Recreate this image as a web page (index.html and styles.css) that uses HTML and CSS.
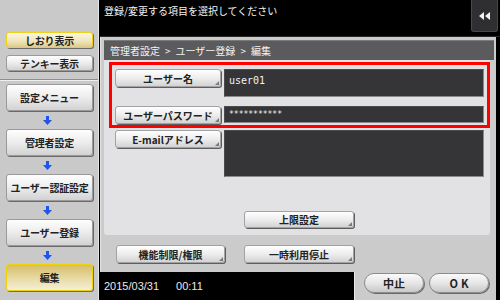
FILE: index.html
```html
<!DOCTYPE html>
<html lang="ja">
<head>
<meta charset="utf-8">
<title>編集</title>
<link rel="stylesheet" href="styles.css">
</head>
<body>
<aside class="side">
  <div class="sbtn yellow small">しおり表示</div>
  <div class="sbtn small second">テンキー表示</div>
  <div class="sep"></div>
  <div class="sbtn">設定メニュー</div>
  <div class="arrow"><svg width="9" height="9" viewBox="0 0 9 9"><path d="M3 0h3v4h3L4.5 9 0 4h3z" fill="#1d55ee"/></svg></div>
  <div class="sbtn">管理者設定</div>
  <div class="arrow"><svg width="9" height="9" viewBox="0 0 9 9"><path d="M3 0h3v4h3L4.5 9 0 4h3z" fill="#1d55ee"/></svg></div>
  <div class="sbtn">ユーザー認証設定</div>
  <div class="arrow"><svg width="9" height="9" viewBox="0 0 9 9"><path d="M3 0h3v4h3L4.5 9 0 4h3z" fill="#1d55ee"/></svg></div>
  <div class="sbtn">ユーザー登録</div>
  <div class="arrow"><svg width="9" height="9" viewBox="0 0 9 9"><path d="M3 0h3v4h3L4.5 9 0 4h3z" fill="#1d55ee"/></svg></div>
  <div class="sbtn gold">編集</div>
</aside>
<main class="main">
  <header class="head">
    <div class="title">登録/変更する項目を選択してください</div>
    <div class="back"><svg width="12" height="8" viewBox="0 0 12 8"><path d="M0 4L5 0v8z M6 4l5-4v8z" fill="#f2f2f2"/></svg></div>
  </header>
  <section class="panel">
    <div class="crumb">管理者設定<span class="gt">&gt;</span>ユーザー登録<span class="gt">&gt;</span>編集</div>
    <div class="content">
      <div class="redbox">
        <div class="btn tri">ユーザー名</div>
        <div class="field tall">user01</div>
        <div class="btn tri">ユーザーパスワード</div>
        <div class="field pw">***********</div>
      </div>
      <div class="mailrow">
        <div class="btn tri">E-mailアドレス</div>
        <div class="field mail"></div>
      </div>
      <div class="limitrow">
        <div class="btn tri wide">上限設定</div>
      </div>
    </div>
    <div class="lower">
      <div class="btn tri wide">機能制限/権限</div>
      <div class="btn tri wide">一時利用停止</div>
    </div>
  </section>
  <footer class="foot">
    <div class="date"><span>2015/03/31</span><span class="time">00:11</span></div>
    <div class="actions">
      <div class="pill">中止</div>
      <div class="pill ok">OK</div>
    </div>
  </footer>
</main>
</body>
</html>
```
FILE: styles.css
```css
* { box-sizing: border-box; }
html, body { margin: 0; padding: 0; }
body {
  width: 500px;
  height: 300px;
  overflow: hidden;
  background: #000;
  display: flex;
  font-family: "Noto Sans CJK JP", "Noto Sans", sans-serif;
}
.side {
  width: 99px;
  height: 300px;
  background: #c9c9c9;
  border-right: 1px solid #e4e4e4;
  display: flex;
  flex-direction: column;
  padding-top: 32px;
}
.sbtn {
  margin-left: 6px;
  width: 87px;
  height: 27px;
  border: 1px solid #9a9a9a;
  border-radius: 3px;
  background: linear-gradient(#fefefe, #ececec 50%, #d2d2d2);
  box-shadow: 1px 1px 0 #6a6a6a;
  font-size: 10px;
  font-weight: bold;
  color: #222;
  display: flex;
  align-items: center;
  justify-content: center;
  white-space: nowrap;
  letter-spacing: -0.2px;
}
.sbtn.small { height: 16px; }
.sbtn.second { margin-top: 7px; }
.sbtn.yellow {
  border-color: #eed21a;
  background: linear-gradient(#fbf6e2, #efe4b8 60%, #dccb8a);
}
.sbtn.gold {
  border-color: #f0d20a;
  background: linear-gradient(#d6bd6a, #e8dba6 55%, #f4eed6);
}
.sep {
  margin-top: 8px;
  height: 2px;
  border-top: 1px solid #8e8e8e;
  border-bottom: 1px solid #efefef;
  margin-left: -1px;
  margin-bottom: 3px;
}
.arrow {
  height: 18px;
  display: flex;
  align-items: center;
  justify-content: center;
  padding-right: 4px;
  padding-top: 1px;
}
.main {
  margin-left: 1px;
  width: 400px;
  display: grid;
  grid-template-rows: 37px 235px 28px;
}
.head {
  display: flex;
  justify-content: space-between;
  align-items: flex-start;
  border-bottom: 1px solid #2a2a2a;
}
.title {
  color: #f4f4f4;
  font-size: 10px;
  padding: 3px 0 0 4px;
}
.back {
  width: 27px;
  height: 32px;
  margin-right: 2px;
  background: #2f2e31;
  border: 1px solid #48474a;
  border-top: none;
  border-radius: 0 0 3px 3px;
  display: flex;
  align-items: center;
  justify-content: center;
}
.panel {
  width: 396px;
  background: #cbcbcb;
  border-left: 1px solid #e2e2e2;
  padding: 3px 2px 0 3px;
  display: flex;
  flex-direction: column;
}
.crumb {
  height: 20px;
  background: #5b5a5d;
  border-top: 1px solid #7a797c;
  color: #f4f4f4;
  font-size: 10px;
  line-height: 19px;
  padding-left: 6px;
  white-space: nowrap;
}
.gt { margin: 0 5px; }
.content {
  width: 386px;
  height: 175px;
  background: #e2e1e3;
  border-radius: 0 0 3px 3px;
  display: flex;
  flex-direction: column;
}
.redbox {
  margin: 2px 0 0 5px;
  width: 381px;
  border: 3px solid #ff0000;
  padding: 4px 3px 2px 3px;
  display: grid;
  grid-template-columns: 106px 1fr;
  grid-template-rows: 28px 17px;
  column-gap: 3px;
  row-gap: 9px;
  align-items: start;
}
.btn {
  position: relative;
  height: 18px;
  border: 1px solid #a2a2a2;
  border-radius: 3px;
  background: linear-gradient(#fefefe, #ededed 50%, #d3d3d3);
  box-shadow: 1px 1px 0 #5e5e5e;
  font-size: 10px;
  font-weight: bold;
  color: #222;
  display: flex;
  align-items: center;
  justify-content: center;
  white-space: nowrap;
}
.tri::after {
  content: "";
  position: absolute;
  right: 1px;
  bottom: 1px;
  border-style: solid;
  border-width: 0 0 4px 4px;
  border-color: transparent transparent #7a7a7a transparent;
}
.wide { width: 110px; }
.redbox .btn { height: 18px; }
.redbox .btn:nth-of-type(2) { height: 17px; }
.field {
  background: #353437;
  border: 1px solid #4b4a4d;
  border-bottom-color: #8a898c;
  border-right-color: #8a898c;
  color: #f2f2f2;
  font-family: "DejaVu Sans Mono", "Liberation Mono", monospace;
  font-size: 10px;
  padding: 5px 4px;
}
.field.tall { height: 28px; }
.field.pw {
  height: 17px;
  font-size: 8px;
  padding: 2px 4px;
  line-height: 12px;
}
.mailrow {
  margin: 2px 0 0 11px;
  display: grid;
  grid-template-columns: 106px 260px;
  column-gap: 3px;
  align-items: start;
}
.field.mail { height: 47px; }
.limitrow {
  margin: 34px 0 0 140px;
}
.limitrow .btn { height: 17px; }
.lower {
  margin: 10px 0 0 12px;
  display: flex;
  gap: 19px;
}
.lower .btn:first-child { width: 109px; }
.foot {
  display: grid;
  grid-template-columns: 254px 142px 4px;
}
.date {
  color: #e8e8e8;
  font-family: "Liberation Sans", Arial, sans-serif;
  font-size: 11px;
  padding: 8px 0 0 4px;
}
.time { margin-left: 17px; }
.actions {
  background: #cbcbcb;
  border-left: 1px solid #e8e8e8;
  display: flex;
  gap: 5px;
  padding: 1px 0 0 9px;
}
.pill {
  width: 60px;
  height: 20px;
  border: 1px solid #8c8c8c;
  border-radius: 10px;
  background: linear-gradient(#fafafa, #e6e6e6 50%, #c9c9c9);
  box-shadow: 1px 1px 0 #6a6a6a;
  font-size: 11px;
  font-weight: bold;
  color: #222;
  display: flex;
  align-items: center;
  justify-content: center;
}
.pill.ok { letter-spacing: 3px; padding-left: 3px; }
```
